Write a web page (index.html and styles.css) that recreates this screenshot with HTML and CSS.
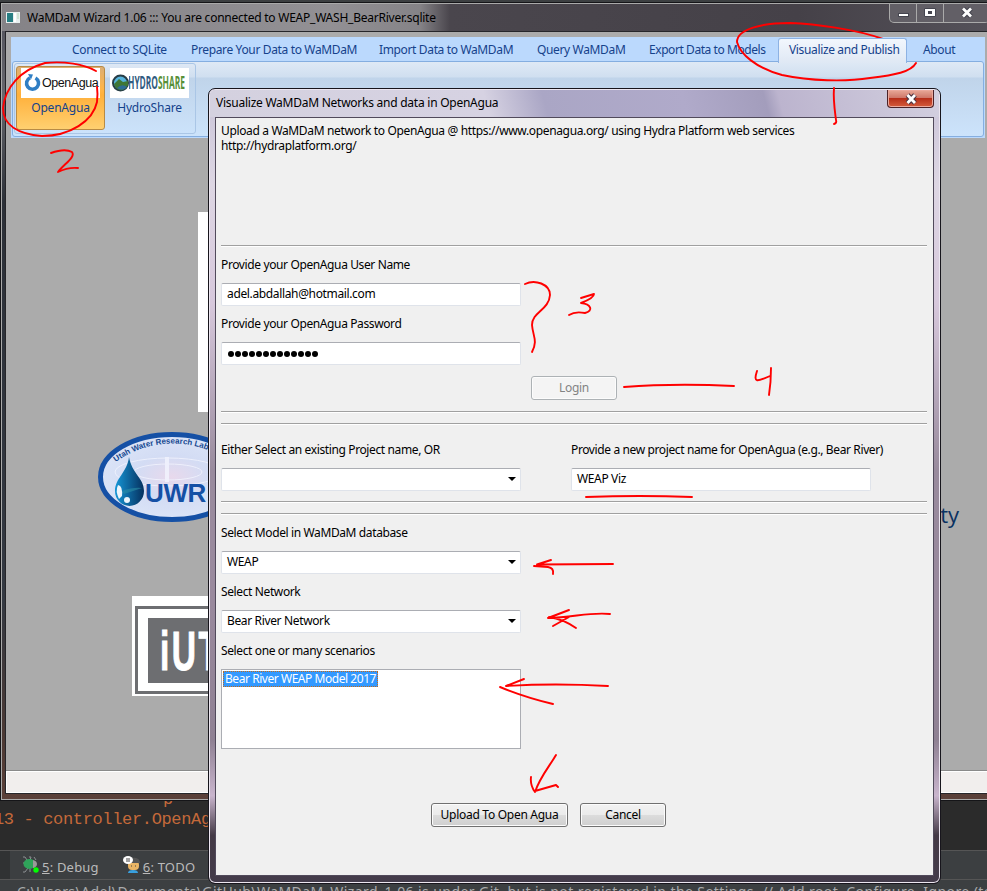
FILE: index.html
```
<!DOCTYPE html>
<html lang="en">
<head>
<meta charset="utf-8">
<title>WaMDaM Wizard 1.06</title>
<link rel="stylesheet" href="styles.css">
</head>
<body>
<div class="desktop">
  <div class="ide">
    <div class="editor"><div class="code"><span class="code-clip">p &nbsp; &nbsp; &nbsp; y</span><span class="code-line">13 - controller.OpenAgua</span></div></div>
    <div class="toolbar">
      <span class="edge"></span>
      <svg class="bug" width="18" height="18" viewBox="0 0 18 18"><g stroke="#8b9092" fill="none"><path d="M1 1h2l2 3M7 1h2l-1 3M1 7h3M1 16h2l3-4M8 16v-3M12 1l2 3M12 12l3 2"/></g><ellipse cx="7.500" cy="8" rx="6" ry="5" fill="#2fa35a"/><path d="M11 4q4 1 4 4t-4 4z" fill="#999"/><circle cx="14" cy="14" r="2.700" fill="#0f0"/></svg>
      <span class="tool debug"><u>5</u>: Debug</span>
      <svg class="todo-icon" width="18" height="18" viewBox="0 0 18 18"><path d="M5 17q0-3 5-3t5 3z" fill="#39a0de"/><rect x="5" y="5" width="11" height="9" rx="4" fill="#eab565"/><path d="M7 6q1-5 6-4 4 1 4 5h-8z" fill="#555"/><ellipse cx="5" cy="4" rx="5" ry="4" fill="#fff"/><path d="M3 3h4M3 5h4M8 10h1M12 10h1" stroke="#444"/></svg>
      <span class="tool"><u>6</u>: TODO</span>
    </div>
    <div class="ide-status">C:\Users\Adel\Documents\GitHub\WaMDaM_Wizard_1.06 is under Git, but is not registered in the Settings. // Add root &nbsp;Configure &nbsp;Ignore (today</div>
  </div>

  <section class="main-window">
    <header class="main-title">
      <svg class="app-icon" width="14" height="11" viewBox="0 0 14 11"><rect width="14" height="11" fill="#e8efef"/><rect x="1" y="1" width="6" height="9" fill="#277e83"/><rect x="8" y="1" width="2" height="9" fill="#fff"/><rect x="11" y="1" width="2" height="6" fill="#cfe3d4"/></svg>
      <span class="main-caption">WaMDaM Wizard 1.06 ::: You are connected to WEAP_WASH_BearRiver.sqlite</span>
      <div class="controls">
        <span class="ctl"><svg width="26" height="17"><rect x="8.500" y="9.500" width="10" height="3" fill="#fff" stroke="#45454f"/></svg></span>
        <span class="ctl"><svg width="26" height="17"><path d="M7.500 4.500h11v8h-11z" fill="#fff" stroke="#45454f"/><rect x="11" y="7" width="4" height="3" fill="#45454f"/></svg></span>
        <span class="ctl wide"><svg width="44" height="17"><path d="M19 4.500l8 8M27 4.500l-8 8" stroke="#45454f" stroke-width="5"/><path d="M19 4.500l8 8M27 4.500l-8 8" stroke="#fff" stroke-width="2.800"/></svg></span>
      </div>
    </header>
    <div class="main-client">
      <div class="ribbon">
        <nav class="tabs">
          <span class="t1">Connect to SQLite</span><span class="t2">Prepare Your Data to WaMDaM</span><span class="t3">Import Data to WaMDaM</span><span class="t4">Query WaMDaM</span><span class="t5">Export Data to Models</span><span class="t6 active">Visualize and Publish</span><span class="t7">About</span>
        </nav>
        <div class="panel">
          <div class="group">
            <div class="tile on">
              <div class="logo"><svg width="19" height="20" viewBox="0 0 19 20"><path d="M7 4.800A6 6 0 1 0 12.500 5" fill="none" stroke="#2f7ec4" stroke-width="3.600"/><path d="M5 1l5 .5-2 5z" fill="#2f7ec4"/></svg><span class="oa-name">OpenAgua</span></div>
              <span class="tile-label">OpenAgua</span>
            </div>
            <div class="tile">
              <div class="logo"><svg width="17" height="22" viewBox="0 0 17 22"><circle cx="8.500" cy="11" r="7.500" fill="#58b4dd" stroke="#263d46" stroke-width="2"/><path d="M2 12l5-5 4 3 5-1v4q-3 6-8 5-5-1-6-6z" fill="#3f7736"/><path d="M5 16q5-5 10-1-4 5-10 1z" fill="#2d6c96"/></svg><svg width="60" height="26"><text x="-1" y="19" class="hs" textLength="57" lengthAdjust="spacingAndGlyphs" fill="#315b80">HYDRO<tspan fill="#579038">SHARE</tspan></text></svg></div>
              <span class="tile-label">HydroShare</span>
            </div>
          </div>
        </div>
      </div>
      <div class="canvas">
        <div class="blank-card"></div>
        <svg class="uwrl" width="150" height="92" viewBox="0 0 150 92">
          <defs><linearGradient id="drop"><stop offset="0" stop-color="#1596d6"/><stop offset="1" stop-color="#06305e"/></linearGradient><radialGradient id="water"><stop offset="0" stop-color="#e8d9ec"/><stop offset=".5" stop-color="#d3dcf4"/><stop offset="1" stop-color="#dbe4f7"/></radialGradient><path id="arc" d="M17.500 31Q44 12.500 75 12.500T133 32"/></defs>
          <ellipse cx="74" cy="46" rx="73.500" ry="43" fill="url(#water)"/><ellipse cx="74" cy="46" rx="71.500" ry="42.500" fill="none" stroke="#1550a5" stroke-width="5"/>
          <g fill="none" stroke="#f3f5ff" opacity=".8"><ellipse cx="70" cy="41" rx="53" ry="14"/><ellipse cx="70" cy="41" rx="34" ry="8"/><path d="M69 26v25" stroke-width="4"/></g>
          <text class="arc-text"><textPath href="#arc">Utah Water Research Laboratory</textPath></text>
          <path d="M31 26C34 43 46 47 46 60a14.500 15 0 0 1-29 0C17 47 29 42 31 26z" fill="url(#drop)"/><path d="M20 54q5 1 4 11l-3 3q-4-8-1-14z" fill="#edf5fc"/><circle cx="29" cy="69" r="3" fill="#edf5fc"/><path d="M24 60q11-4 20-3l-18 6z" fill="#2c8da5" opacity=".6"/>
          <text x="47" y="71" class="uwr" textLength="61" lengthAdjust="spacingAndGlyphs">UWR</text>
        </svg>
        <div class="iutah"><div class="iutah-frame"><div class="iutah-fill"><span>iUTAH</span></div></div></div>
        <div class="university">University</div>
      </div>
      <div class="statusbar"></div>
    </div>
  </section>

  <section class="dialog">
    <header class="dialog-title"><span>Visualize WaMDaM Networks and data in OpenAgua</span>
      <div class="close"><svg width="46" height="18"><path d="M19.500 5l7.500 8M27 5l-7.500 8" stroke="#4a3340" stroke-width="5"/><path d="M19.500 5l7.500 8M27 5l-7.500 8" stroke="#fff" stroke-width="2.800"/></svg></div>
    </header>
    <div class="form">
      <p class="intro">Upload a WaMDaM network to OpenAgua @ https://www.openagua.org/ using Hydra Platform web services<br>http://hydraplatform.org/</p>
      <hr>
      <label class="first">Provide your OpenAgua User Name</label>
      <div class="field">adel.abdallah@hotmail.com</div>
      <label>Provide your OpenAgua Password</label>
      <div class="field dots"><i></i><i></i><i></i><i></i><i></i><i></i><i></i><i></i><i></i><i></i><i></i><i></i><i></i></div>
      <div class="button login">Login</div>
      <hr><hr class="pair">
      <div class="columns">
        <div><label>Either Select an existing Project name, OR</label><div class="field combo"></div></div>
        <div><label>Provide a new project name for OpenAgua (e.g., Bear River)</label><div class="field">WEAP Viz</div></div>
      </div>
      <hr class="after"><hr class="pair">
      <label class="model">Select Model in WaMDaM database</label>
      <div class="field combo">WEAP</div>
      <label>Select Network</label>
      <div class="field combo">Bear River Network</div>
      <label>Select one or many scenarios</label>
      <div class="list"><span>Bear River WEAP Model 2017</span></div>
      <div class="actions"><div class="button upload">Upload To Open Agua</div><div class="button">Cancel</div></div>
    </div>
  </section>

  <svg class="ink" width="987" height="891" viewBox="0 0 987 891">
    <path d="M906 54C904 46 895 43 883 39C855 29 815 24 790 23C762 23 737 29 737 42C740 54 756 68 782 75C810 81 845 82 870 78C895 75 911 72 916 63"/>
    <path d="M834 88C833 100 835 112 836 120Q837 123 834 124"/>
    <path d="M96 71C84 64 64 61 45 63C20 70 5 88 3 108C3 125 18 134 42 136C70 136 93 121 97 102Q98 94 97 87"/>
    <path d="M51 153Q65 148 72 152C76 157 64 164 58 172Q68 167 78 168"/>
    <path d="M525 284C535 279 550 284 550 295C549 310 532 312 532 325C533 337 538 340 532 352"/>
    <path d="M581 298L594 294Q594 298 581 303C591 304 594 311 585 313Q575 311 569 315"/>
    <path d="M624 387Q675 383 734 386M757 371C753 383 757 382 770 376M771 368Q771 382 769 395"/>
    <path d="M586 497Q640 495 692 497"/>
    <path d="M613 564L537 564.500L551 560M534 566L548 567Q554 568 553 574"/>
    <path d="M610 614C590 612 575 617 548 618L569 610M549 617Q563 619 576 628M553 626L569 617"/>
    <path d="M608 686Q555 683 506 686L524 679M500 687Q524 697 553 704"/>
    <path d="M556 755C549 767 540 777 535 792Q530 785 531 777M535 791L556 785L558 787"/>
  </svg>
</div>
</body>
</html>
```
FILE: styles.css
```
* { box-sizing: border-box; }
body { margin: 0; overflow: hidden; font: 12px/15px "Noto Sans", "Open Sans", sans-serif; letter-spacing: -0.355px; color: #000; }
.desktop { position: relative; width: 987px; height: 891px; overflow: hidden; background: #3c3f41; white-space: nowrap; }
.ide { height: 891px; display: flex; flex-direction: column; justify-content: flex-end; }
.editor { height: 51px; background: #2b2b2b; border-bottom: 1px solid #555; overflow: hidden; }
.code { display: flex; flex-direction: column; font: 17px/20px "Liberation Mono", monospace; letter-spacing: -.35px; color: #c4693a; }
.code-clip { height: 7px; line-height: 0; padding-left: 163px; }
.code-line { margin-left: -6px; line-height: 26px; }
.toolbar { height: 29px; display: flex; align-items: center; background: #3c3f41; color: #bbb; font-size: 13px; letter-spacing: .2px; border-bottom: 1px solid #555; }
.tool { padding-top: 4px; }
.edge { width: 10px; height: 28px; background: #303233; margin-right: 12px; }
.bug { margin-right: 2px; }
.debug { margin-right: 24px; }
.todo-icon { margin-right: 2px; }
.ide-status { height: 11px; padding-left: 17px; font-size: 14px; line-height: 23px; letter-spacing: .42px; color: #a9abac; overflow: hidden; }

.main-window { position: absolute; left: 0; top: 2px; width: 1000px; height: 799px; padding: 1px 5px 6px 4px; border: 1px solid #151518; box-shadow: inset 0 0 0 1px #aaa; background: linear-gradient(#50505a, #68686e 12%, #2c3038 25%, #343942 75%, #4c3934 92%, #5b4039); }
.main-title { height: 27px; display: flex; align-items: center; background: linear-gradient(90deg, #858387, #929094 33%, #858387 42%, #4a464d 45%, #454148 80%, #55525a); margin: 0 -3px; padding-left: 4px; }
.app-icon { margin-right: 7px; }
.main-caption { width: 412px; letter-spacing: -.235px; }
.controls { display: flex; align-self: flex-start; margin-left: 450px; border: 1px solid #aaa; border-top: 0; border-radius: 0 0 5px 5px; background: #625f66; height: 19px; }
.ctl { height: 18px; width: 27px; border-right: 1px solid #aaa; }
.wide { width: 45px; }
.main-client { height: 763px; border: 1px solid #26262a; background: #ababab; padding: 5px 0 0 5px; display: flex; flex-direction: column; }
.ribbon { width: 974px; height: 101px; background: #bbd9fd; color: #15428b; }
.tabs { height: 24px; display: flex; padding-left: 61px; }
.tabs span { line-height: 26px; height: 24px; }
.t1 { width: 119px; } .t2 { width: 188px; } .t3 { width: 158px; } .t4 { width: 112px; } .t5 { width: 129px; letter-spacing: -.43px; }
.t6 { width: 129px; } .t7 { padding-left: 16px; }
.tabs .active { position: relative; top: 1px; height: 25px; line-height: 22px; padding-left: 10px; background: linear-gradient(#f2f7fd, #dfe8f4); border: 1px solid #8db2e3; border-bottom: 0; border-radius: 3px 3px 0 0; z-index: 1; }
.panel { height: 76px; margin: 0 1px; border: 1px solid #85aee0; border-radius: 3px; padding: 1px; background: linear-gradient(#dfe9f5 0, #d0dff0 15px, #c0d4ea 16px, #cce3fb); }
.group { width: 182px; height: 71px; border: 1px solid #aac6e6; border-radius: 3px; display: flex; padding: 2px 1px; }
.tile { width: 89px; height: 64px; padding-top: 2px; display: flex; flex-direction: column; align-items: center; flex: none; }
.tile.on { background: linear-gradient(#dcae74, #ffb547 35%, #ffb03b 45%, #ffd070); border: 1px solid #b88b45; border-radius: 3px; padding-top: 1px; }
.logo { width: 79px; height: 30px; background: #fff; display: flex; align-items: center; padding-left: 2px; flex: none; }
.oa-name { font: 12.500px/18px "Liberation Sans", sans-serif; letter-spacing: -.45px; margin-left: 0; color: #111; }
.hs { font: bold 18px "Open Sans", sans-serif; letter-spacing: 0; }
.tile-label { line-height: 20px; letter-spacing: -.2px; }
.canvas { position: relative; height: 634px; margin-left: -5px; border-bottom: 1px solid #8a8a8a; }
.blank-card { position: absolute; left: 192px; top: 74px; width: 20px; height: 200px; background: #fff; }
.uwrl { position: absolute; left: 92px; top: 293px; }
.arc-text { font: bold 8px "Liberation Sans", sans-serif; fill: #174991; letter-spacing: 0; }
.uwr { font: bold 25px "Liberation Sans", sans-serif; fill: #1550a5; }
.iutah { position: absolute; left: 126px; top: 458px; width: 200px; height: 100px; background: #fff; padding: 10px 3px 2px; }
.iutah-frame { height: 88px; border: 3px solid #6d6e71; padding: 9px 10px; }
.iutah-fill { height: 65px; background: #6d6e71; color: #fff; font: bold 56px/66px "Liberation Sans", sans-serif; padding-left: 12px; letter-spacing: 4px; }
.iutah-fill span { display: inline-block; transform: scaleX(.6); transform-origin: left; -webkit-text-stroke: 1px #fff; }
.university { position: absolute; left: 790px; width: 163px; text-align: right; top: 361px; font: 22px/30px "Open Sans", sans-serif; color: #0a3161; letter-spacing: 0; }
.statusbar { height: 22px; margin-left: -5px; background: #f1eeed; border: 1px solid #fff; }

.dialog { position: absolute; left: 208px; top: 88px; width: 733px; height: 796px; padding: 1px 6px 7px; border: 1px solid #17151c; border-radius: 7px; box-shadow: inset 0 0 0 1px #ece6f0; background: linear-gradient(#c9c4d8, #ddd6e3 12%, #d7c8dc 27%, #998b9d 48%, #99899d 65%, #8f8193 82%, #c9b5cd 89%, #443a46 94%, #443c4b); }
.dialog-title { height: 27px; display: flex; justify-content: space-between; margin: 0 -5px; padding-left: 6px; line-height: 26px; border-radius: 5px 5px 0 0; background: linear-gradient(75deg, #d4d1df, #d6d2e2 38%, #aaa6c5 46%, #b0aaca 65%, #a39dbc 76%, #bcb4ce 78%, #d2cfdf); letter-spacing: -.25px; }
.close { width: 47px; height: 18px; margin-right: 5px; border: 1px solid #4b2228; border-top: 0; border-radius: 0 0 4px 4px; background: linear-gradient(#e8a998, #cf786a 45%, #b72f1a 50%, #d55c3c); box-shadow: inset 0 0 0 1px #eba99d; }
.close svg { display: block; }
.form { height: 759px; border: 1px solid #514a5b; background: #f0f0f0; padding: 5px 6px 0 5px; display: flex; flex-direction: column; }
.intro { margin: 0; height: 122px; flex: none; }
hr { width: 706px; height: 2px; border: 0; border-top: 1px solid #a0a0a0; border-bottom: 1px solid #fff; margin: 0; flex: none; }
label { display: block; height: 15px; margin: 11px 0; flex: none; letter-spacing: -.38px; }
.first { margin-top: 10px; }
.field { width: 300px; height: 23px; border: 1px solid #dfe3ea; border-top-color: #abadb3; border-radius: 2px; background: #fff; padding: 0 5px 1px; line-height: 20px; flex: none; display: flex; align-items: center; }
.dots { gap: 1px; padding-left: 6px; padding-bottom: 0; }
.dots i { width: 6px; height: 6px; border-radius: 50%; background: #000; }
.field + label { margin-top: 10px; margin-bottom: 11px; }
.combo { justify-content: space-between; }
.combo::after { content: ""; border: 4px solid transparent; border-top-color: #000; border-bottom: 0; margin-left: auto; margin-right: -1px; }
.button { width: 86px; height: 24px; border: 1px solid #707070; border-radius: 3px; box-shadow: inset 0 0 0 1px #fcfcfc; background: linear-gradient(#f2f2f2, #ebebeb 49%, #dcdcdc 51%, #cfcfcf); text-align: center; line-height: 22px; flex: none; letter-spacing: -.28px; }
.login { margin: 11px 0 11px 310px; color: #838383; border-color: #adb2b5; background: #f4f4f4; }
.pair { margin-top: 10px; }
.columns { display: flex; gap: 50px; }
.columns label { margin: 17px 0 11px; }
.after { margin-top: 10px; }
.model { margin: 10px 0 11px; }
.list { width: 300px; height: 80px; border: 1px solid #abadb3; background: #fff; padding: 1px; flex: none; }
.list span { display: block; width: 155px; height: 16px; line-height: 14px; background: #3399ff; color: #fff; border: 1px dotted #c76a16; padding-left: 1px; letter-spacing: -.45px; }
.actions { display: flex; gap: 12px; margin: 54px 0 0 210px; }
.upload { width: 137px; }
.ink { position: absolute; left: 0; top: 0; fill: none; stroke: #f00; stroke-width: 1.900; stroke-linecap: round; stroke-linejoin: round; }
```
